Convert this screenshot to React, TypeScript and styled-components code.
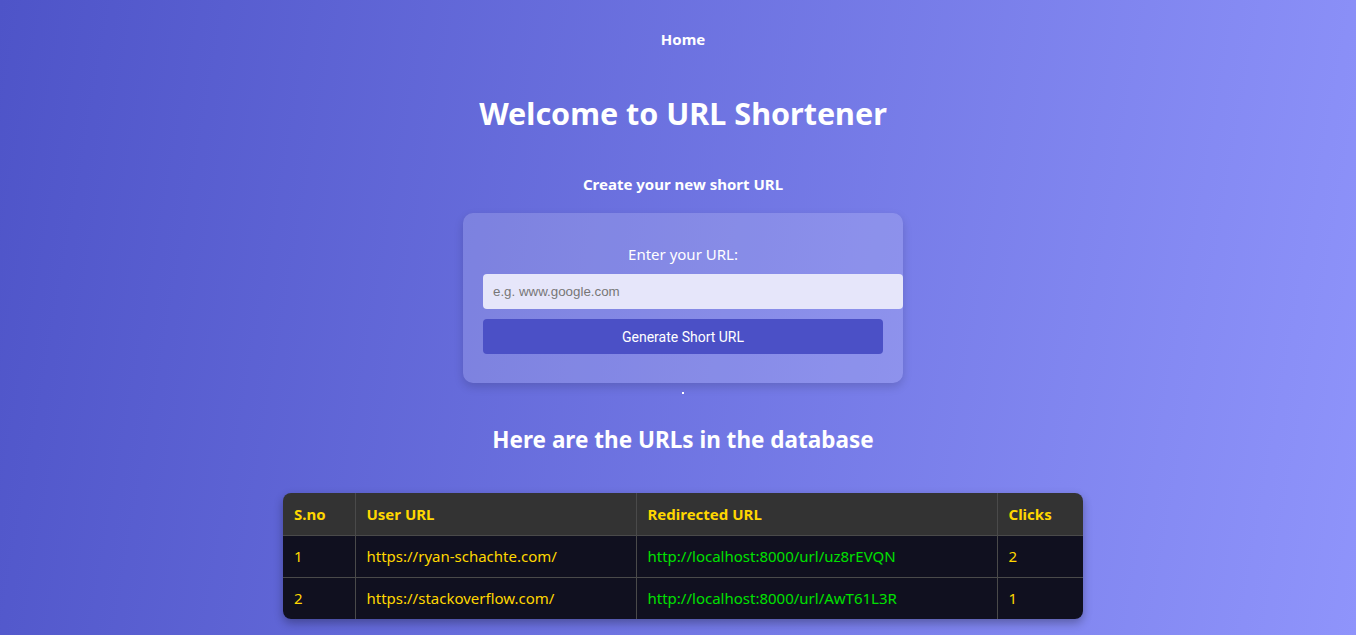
import React from "react";
import styled, { createGlobalStyle } from "styled-components";

const GlobalStyle = createGlobalStyle`
  html { scrollbar-width: none; }
  html::-webkit-scrollbar, body::-webkit-scrollbar { display: none; }
  html, body { margin: 0; padding: 0; }
  body {
    min-height: 100vh;
    background: linear-gradient(100deg, #4e54c8 0%, #8f94fb 100%);
    background-attachment: fixed;
    font-family: "Noto Sans", "Open Sans", sans-serif;
    color: #fff;
  }
`;

const Page = styled.div`
  display: flex;
  flex-direction: column;
  align-items: center;
  padding: 29px 0 40px 10px;
  text-align: center;
`;

const Nav = styled.nav`
  font-size: 15px;
  font-weight: 700;
  line-height: 20px;
`;

const Title = styled.h1`
  margin: 40px 0 0;
  font-size: 30.5px;
  line-height: 48px;
  font-weight: 700;
`;

const Subtitle = styled.h2`
  margin: 37px 0 0;
  font-size: 15px;
  line-height: 20px;
  font-weight: 700;
`;

const Card = styled.form`
  box-sizing: border-box;
  margin-top: 19px;
  width: 440px;
  height: 170px;
  padding: 31px 20px 20px;
  border-radius: 10px;
  background: rgba(255, 255, 255, 0.16);
  box-shadow: 0 4px 10px rgba(0, 0, 0, 0.15);
  display: flex;
  flex-direction: column;
  align-items: flex-start;
`;

const Label = styled.label`
  align-self: stretch;
  font-size: 15px;
  line-height: 21px;
  margin-bottom: 9px;
`;

const Input = styled.input`
  width: 100%;
  height: 35px;
  padding: 0 10px;
  border: none;
  border-radius: 4px;
  background: #e6e6fa;
  font-family: "Liberation Sans", Arial, sans-serif;
  font-size: 13.333px;
  color: #333;
  outline: none;
  &::placeholder { color: #777; }
`;

const Button = styled.button`
  margin-top: 10px;
  width: 100%;
  height: 35px;
  border: none;
  border-radius: 4px;
  background: #4b50c6;
  color: #fff;
  font-family: Roboto, "Liberation Sans", sans-serif;
  font-size: 14px;
  cursor: pointer;
`;

const Dot = styled.div`
  margin-top: 9px;
  width: 2px;
  height: 2px;
  background: #fff;
`;

const SectionTitle = styled.h2`
  margin: 31px 0 0;
  font-size: 22.5px;
  line-height: 30px;
  font-weight: 700;
`;

const TableWrap = styled.div`
  margin-top: 38px;
  width: 800px;
  border-radius: 8px;
  overflow: hidden;
  box-shadow: 0 4px 10px rgba(0, 0, 0, 0.3);
`;

const Table = styled.table`
  width: 100%;
  border-collapse: collapse;
  text-align: left;
  font-size: 15px;
`;

const Th = styled.th<{ $w: number }>`
  width: ${(p) => p.$w}px;
  height: 42px;
  box-sizing: border-box;
  padding: 0 11px;
  background: #333333;
  color: #ffd700;
  font-weight: 700;
  border: 1px solid #4a4a4a;
  border-top: none;
  &:first-child { border-left: none; }
  &:last-child { border-right: none; }
`;

const Td = styled.td<{ $green?: boolean }>`
  height: 42px;
  box-sizing: border-box;
  padding: 0 11px;
  background: #10101f;
  color: ${(p) => (p.$green ? "#00e000" : "#ffd700")};
  border: 1px solid #4a4a4a;
  &:first-child { border-left: none; }
  &:last-child { border-right: none; }
  tr:last-child & { border-bottom: none; }
`;

const rows = [
  { id: 1, user: "https://ryan-schachte.com/", short: "http://localhost:8000/url/uz8rEVQN", clicks: 2 },
  { id: 2, user: "https://stackoverflow.com/", short: "http://localhost:8000/url/AwT61L3R", clicks: 1 },
];

export default function App() {
  return (
    <>
      <GlobalStyle />
      <Page>
        <Nav>Home</Nav>
        <Title>Welcome to URL Shortener</Title>
        <Subtitle>Create your new short URL</Subtitle>
        <Card onSubmit={(e) => e.preventDefault()}>
          <Label htmlFor="url">Enter your URL:</Label>
          <Input id="url" placeholder="e.g. www.google.com" />
          <Button type="submit">Generate Short URL</Button>
        </Card>
        <Dot />
        <SectionTitle>Here are the URLs in the database</SectionTitle>
        <TableWrap>
          <Table>
            <thead>
              <tr>
                <Th $w={72}>S.no</Th>
                <Th $w={281}>User URL</Th>
                <Th $w={361}>Redirected URL</Th>
                <Th $w={86}>Clicks</Th>
              </tr>
            </thead>
            <tbody>
              {rows.map((r) => (
                <tr key={r.id}>
                  <Td>{r.id}</Td>
                  <Td>{r.user}</Td>
                  <Td $green>{r.short}</Td>
                  <Td>{r.clicks}</Td>
                </tr>
              ))}
            </tbody>
          </Table>
        </TableWrap>
      </Page>
    </>
  );
}
